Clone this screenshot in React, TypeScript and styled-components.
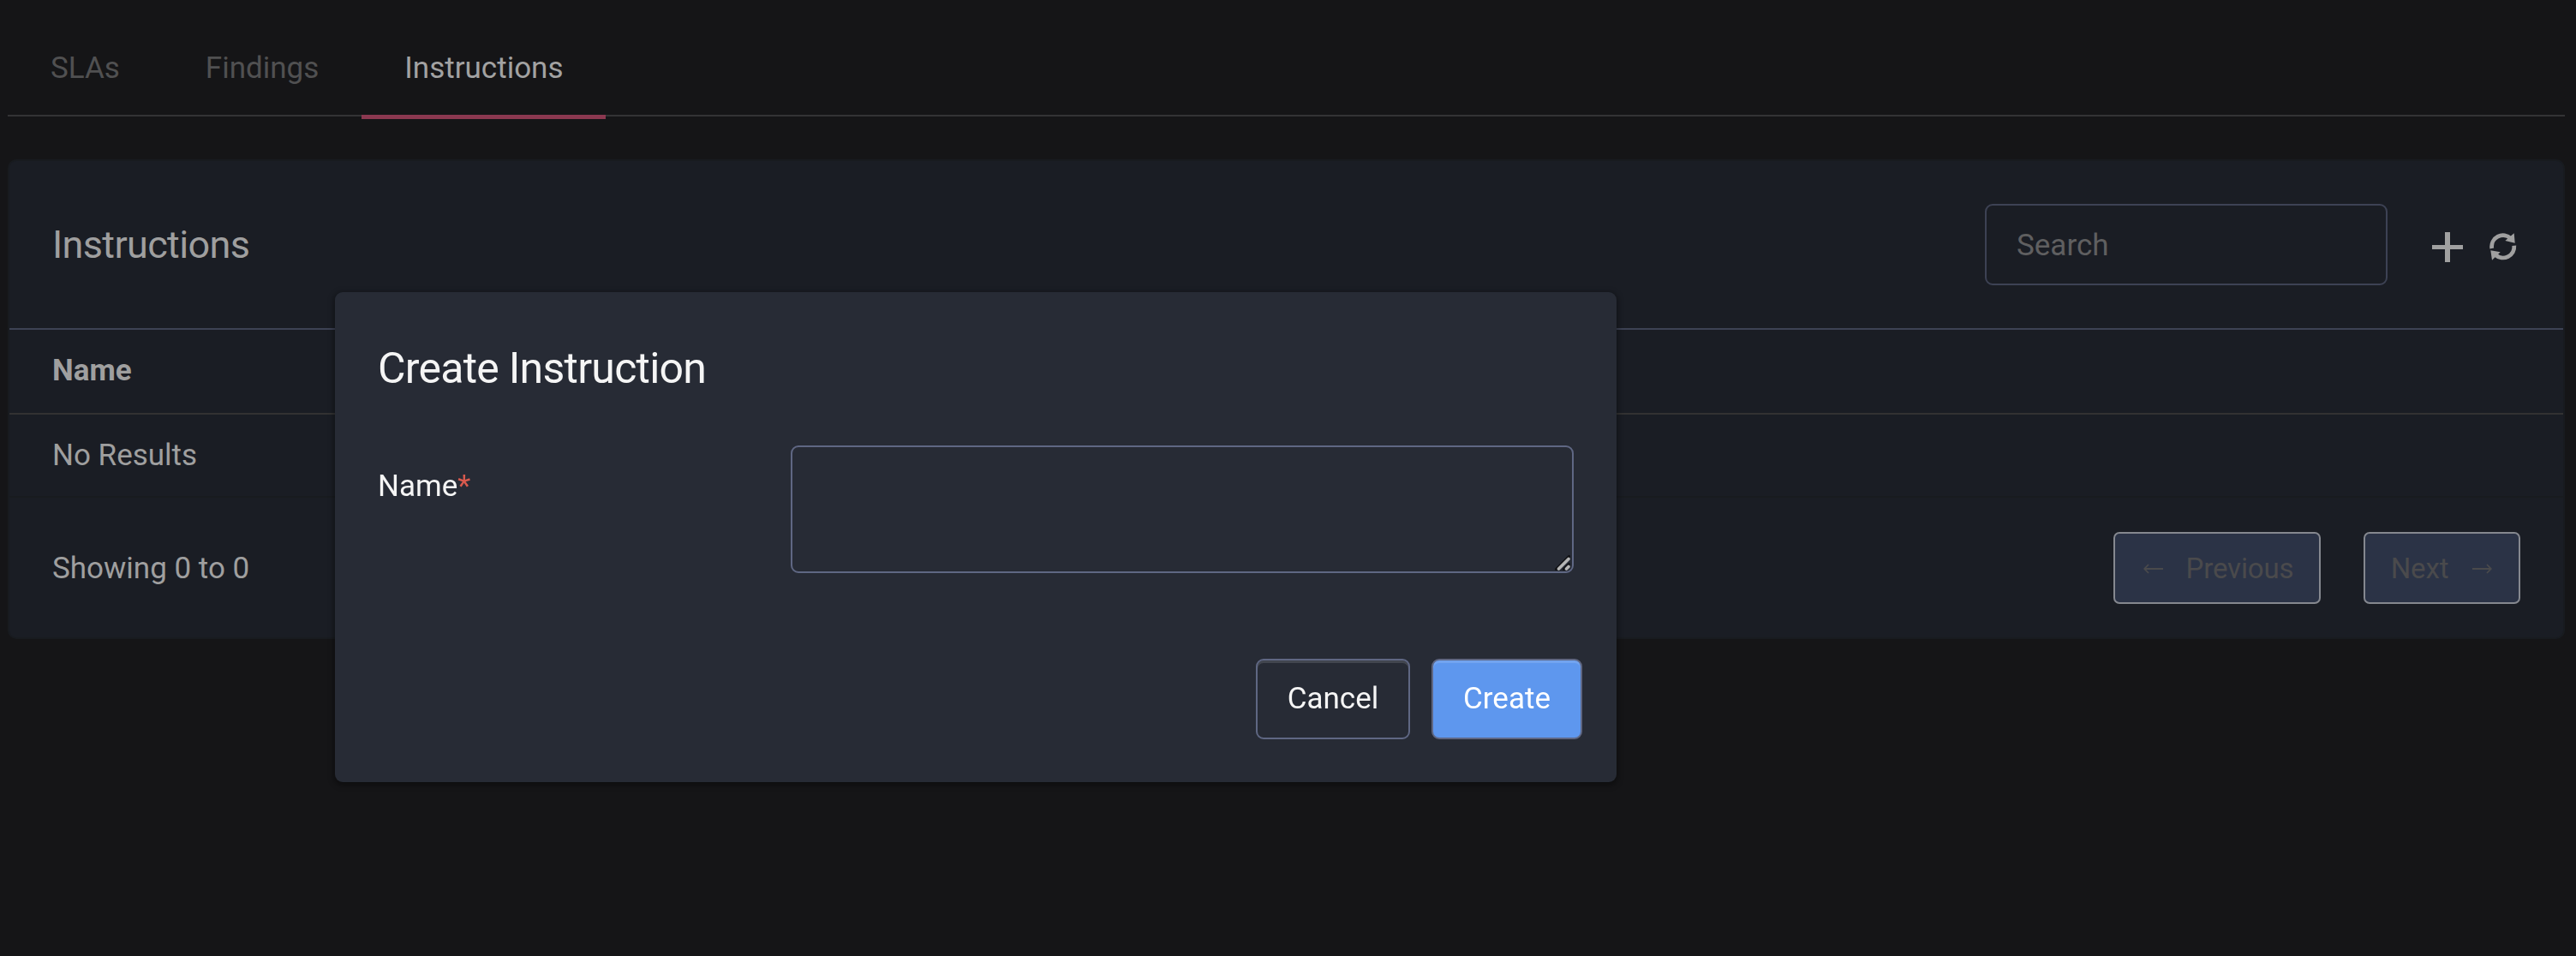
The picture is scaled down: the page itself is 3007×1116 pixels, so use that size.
import React, { FunctionComponent } from "react";

import styled, { createGlobalStyle } from "styled-components";

type TTab = {
  label: string;
  active?: boolean;
};

interface IInstructionTable {
  title: string;
}

interface ICreateDialog {
  title: string;
}

const tabs: TTab[] = [
  { label: "SLAs" },
  { label: "Findings" },
  { label: "Instructions", active: true },
];

const GlobalStyle = createGlobalStyle`
  * {
    box-sizing: border-box;
  }

  body {
    margin: 0;
    background-color: #151517;
    color: #9f9f9f;
    font-family: Roboto, sans-serif;
    font-size: 35px;
    line-height: 52px;
  }
`;

const StyledPage = styled.div`
  min-height: 1116px;
  padding: 0 13px 0 9px;
  overflow: hidden;
`;

const StyledTabs = styled.div`
  display: flex;
  height: 136px;
  border-bottom: 2px solid #333335;
`;

const StyledTab = styled.div<{ $active?: boolean }>`
  height: 139px;
  padding: 54px ${(props) => (props.$active ? "49px" : "50px")} 0 50px;
  border-bottom: ${(props) => (props.$active ? "5px solid #8b3850" : "0")};
  color: ${(props) => (props.$active ? "#a2a2a2" : "#505051")};
`;

const StyledCard = styled.section`
  height: 560px;
  margin-top: 50px;
  border: 2px solid #181b1f;
  border-radius: 10px;
  background-color: #1a1d24;
`;

const StyledCardHeader = styled.header`
  display: flex;
  align-items: center;
  height: 197px;
  padding: 0 54px 0 50px;
  border-bottom: 2px solid #3d4254;
`;

const StyledCardTitle = styled.h3`
  flex: 1;
  margin: 0;
  font-size: 45px;
  font-weight: 400;
  letter-spacing: -0.65px;
`;

const StyledSearch = styled.input`
  width: 470px;
  height: 95px;
  padding: 2px 35px 0;
  border: 2px solid #3d4254;
  border-radius: 9px;
  background-color: transparent;
  color: #9f9f9f;
  font: inherit;

  &::placeholder {
    color: #5f5f60;
    opacity: 1;
  }
`;

const StyledActions = styled.div`
  display: flex;
  gap: 31px;
  align-items: center;
  margin-left: 52px;
  padding-top: 5px;
`;

const StyledRow = styled.div<{ $head?: boolean }>`
  height: ${(props) => (props.$head ? "99px" : "97px")};
  padding: 22px 50px 0;
  border-bottom: 2px solid ${(props) => (props.$head ? "#323232" : "#181b1f")};
  font-weight: ${(props) => (props.$head ? 700 : 400)};
`;

const StyledCardFooter = styled.footer`
  display: flex;
  gap: 50px;
  align-items: center;
  height: 163px;
  padding: 0 50px;
`;

const StyledCount = styled.div`
  flex: 1;
  padding-top: 2px;
`;

const StyledPageButton = styled.button<{ $width: number; $next?: boolean }>`
  display: flex;
  justify-content: center;
  align-items: center;
  gap: ${(props) => (props.$next ? "28px" : "27px")};
  width: ${(props) => props.$width}px;
  height: 84px;
  padding: ${(props) => (props.$next ? "2px 1px 0 0" : "2px 0 0 3px")};
  border: 2px solid #85888f;
  border-radius: 7px;
  background-color: #2b3346;
  color: #4a4a4c;
  font: inherit;
  font-size: 33px;
  letter-spacing: -0.15px;
`;

const StyledOverlay = styled.div`
  position: fixed;
  inset: 0;
`;

const StyledDialog = styled.div`
  width: 1496px;
  height: 572px;
  margin: 341px 0 0 391px;
  padding: 63px 40px 50px 50px;
  border-radius: 9px;
  background-color: #272b35;
  box-shadow: 0 2px 6px 2px rgba(0, 0, 0, 0.35);
  color: #f5f5f5;
`;

const StyledDialogTitle = styled.h2`
  margin: 0;
  font-size: 50px;
  font-weight: 400;
  letter-spacing: -0.75px;
`;

const StyledField = styled.div`
  display: flex;
  justify-content: space-between;
  margin: 64px 10px 100px 0;
`;

const StyledLabel = styled.label`
  padding-top: 22px;
`;

const StyledRequired = styled.span`
  color: #d95a4e;
`;

const StyledTextAreaWrap = styled.div`
  position: relative;
  width: 914px;
  height: 149px;
`;

const StyledTextArea = styled.textarea`
  display: block;
  width: 100%;
  height: 100%;
  border: 2px solid #5f6783;
  border-radius: 9px;
  background-color: transparent;
  color: inherit;
  font: inherit;
  resize: none;
`;

const StyledGrip = styled.svg`
  position: absolute;
  right: 4px;
  bottom: 3px;
`;

const StyledDialogActions = styled.div`
  display: flex;
  gap: 25px;
  justify-content: flex-end;
`;

const StyledDialogButton = styled.button<{ $primary?: boolean }>`
  width: ${(props) => (props.$primary ? "176px" : "180px")};
  height: 94px;
  padding: 0;
  border: 2px solid #5f6783;
  border-radius: 9px;
  background-color: ${(props) => (props.$primary ? "#5e97ee" : "transparent")};
  box-shadow: inset 0 3px 0 rgba(255, 255, 255, 0.13);
  color: ${(props) => (props.$primary ? "#ffffff" : "#f5f5f5")};
  font: inherit;
`;

const PlusIcon = () => (
  <svg width="36" height="35" viewBox="0 0 36 35">
    <path d="M15 0h6v15h15v5h-15v15h-6v-15h-15v-5h15z" fill="#a0a0a0" />
  </svg>
);

const RefreshIcon = () => (
  <svg width="32" height="32" viewBox="0 0 32 32">
    <g fill="none" stroke="#a0a0a0" strokeWidth="4.8">
      <path d="M2.8 18A13.1 13.1 0 0 1 25 6.6" />
      <path d="M28.8 14.7A13.1 13.1 0 0 1 7 25.6" />
    </g>
    <path
      d="M28.7 0.3L29.7 11.7L18.3 9ZM3 31.7L1.3 20.3L12.7 22.3Z"
      fill="#a0a0a0"
    />
  </svg>
);

const ArrowIcon = ({ right }: { right?: boolean }) => (
  <svg width="23" height="12" viewBox="0 0 23 12">
    <path
      d={right ? "M0 6h21.5M17 1l4.8 5l-4.8 5" : "M23 6H1.5M6 1L1.2 6L6 11"}
      fill="none"
      stroke="currentColor"
      strokeWidth="1.8"
    />
  </svg>
);

const InstructionTable: FunctionComponent<IInstructionTable> = (props) => {
  const { title } = props;

  return (
    <StyledCard>
      <StyledCardHeader>
        <StyledCardTitle>{title}</StyledCardTitle>
        <StyledSearch placeholder="Search" />
        <StyledActions>
          <PlusIcon />
          <RefreshIcon />
        </StyledActions>
      </StyledCardHeader>
      <StyledRow $head>Name</StyledRow>
      <StyledRow>No Results</StyledRow>
      <StyledCardFooter>
        <StyledCount>Showing 0 to 0</StyledCount>
        <StyledPageButton $width={242} disabled>
          <ArrowIcon />
          Previous
        </StyledPageButton>
        <StyledPageButton $width={183} $next disabled>
          Next
          <ArrowIcon right />
        </StyledPageButton>
      </StyledCardFooter>
    </StyledCard>
  );
};

const CreateDialog: FunctionComponent<ICreateDialog> = (props) => {
  const { title } = props;

  return (
    <StyledOverlay>
      <StyledDialog role="dialog">
        <StyledDialogTitle>{title}</StyledDialogTitle>
        <StyledField>
          <StyledLabel>
            Name<StyledRequired>*</StyledRequired>
          </StyledLabel>
          <StyledTextAreaWrap>
            <StyledTextArea />
            <StyledGrip width="18" height="18" viewBox="0 0 18 18" strokeLinecap="round">
              <path d="M1.5 16.5L16.5 1.5M10.5 16.5L16.5 10.5" stroke="#101114" strokeWidth="3" />
              <path d="M4.5 16L16 4.5M13.5 16L16 13.5" stroke="#b5b5b5" strokeWidth="3.6" />
            </StyledGrip>
          </StyledTextAreaWrap>
        </StyledField>
        <StyledDialogActions>
          <StyledDialogButton>Cancel</StyledDialogButton>
          <StyledDialogButton $primary>Create</StyledDialogButton>
        </StyledDialogActions>
      </StyledDialog>
    </StyledOverlay>
  );
};

const App: FunctionComponent = () => {
  return (
    <StyledPage>
      <GlobalStyle />
      <StyledTabs>
        {tabs.map((tab) => (
          <StyledTab key={tab.label} $active={tab.active}>
            {tab.label}
          </StyledTab>
        ))}
      </StyledTabs>
      <InstructionTable title="Instructions" />
      <CreateDialog title="Create Instruction" />
    </StyledPage>
  );
};

export default App;
